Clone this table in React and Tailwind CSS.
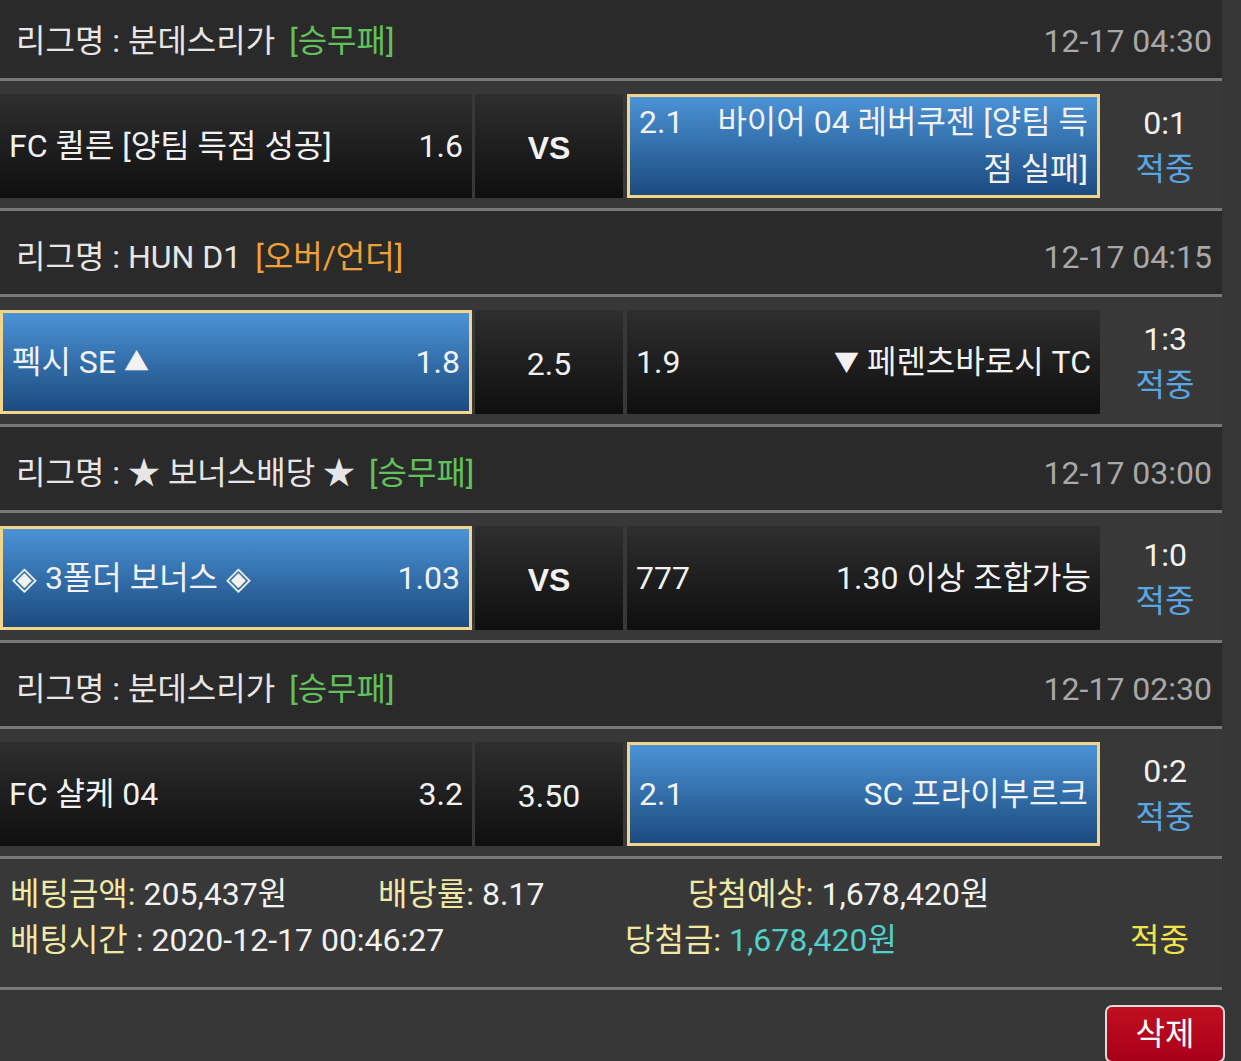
import React from 'react';

const FONT = { fontFamily: 'Roboto, "Noto Sans CJK KR", "Noto Sans", sans-serif' };

const Tri = ({ children }) => <span className="text-[25px] align-[2px]">{children}</span>;

const matches = [
  {
    league: '분데스리가',
    type: '[승무패]',
    typeColor: 'text-[#62c15a]',
    time: '12-17 04:30',
    home: { name: 'FC 퀼른 [양팀 득점 성공]', odds: '1.6', picked: false },
    draw: { text: 'VS', bold: true },
    away: { name: <>바이어 04 레버쿠젠 [양팀 득<br />점 실패]</>, odds: '2.1', picked: true },
    score: '0:1',
  },
  {
    league: 'HUN D1',
    type: '[오버/언더]',
    typeColor: 'text-[#f0a035]',
    time: '12-17 04:15',
    home: { name: <>펙시 SE <Tri>▲</Tri></>, odds: '1.8', picked: true },
    draw: { text: '2.5', bold: false },
    away: { name: <><Tri>▼</Tri> 페렌츠바로시 TC</>, odds: '1.9', picked: false },
    score: '1:3',
  },
  {
    league: '★ 보너스배당 ★',
    type: '[승무패]',
    typeColor: 'text-[#62c15a]',
    time: '12-17 03:00',
    home: { name: '◈ 3폴더 보너스 ◈', odds: '1.03', picked: true },
    draw: { text: 'VS', bold: true },
    away: { name: '1.30 이상 조합가능', odds: '777', picked: false },
    score: '1:0',
  },
  {
    league: '분데스리가',
    type: '[승무패]',
    typeColor: 'text-[#62c15a]',
    time: '12-17 02:30',
    home: { name: 'FC 샬케 04', odds: '3.2', picked: false },
    draw: { text: '3.50', bold: false },
    away: { name: 'SC 프라이부르크', odds: '2.1', picked: true },
    score: '0:2',
  },
];

const cellBase = 'h-[104px] flex items-center text-[32px] text-[#f2f2f2]';
const plain = 'bg-gradient-to-b from-[#2f2f2f] to-[#0f0f0f]';
const picked = 'bg-gradient-to-b from-[#4b93d6] to-[#1c4b80] border-[3px] border-[#f2d58a]';

const LeagueHeader = ({ m }) => (
  <div className="h-[86px] pt-[8px] flex items-center justify-between bg-[#2a2a2a] border-b-[3px] border-[#787878] pl-[16px] pr-[10px] text-[32px]">
    <div className="text-[#e6e6e6]">
      리그명 : {m.league}
      <span className={`ml-[14px] ${m.typeColor}`}>{m.type}</span>
    </div>
    <div className="text-[#a8a8a8]">{m.time}</div>
  </div>
);

const MatchRow = ({ m }) => (
  <div className="bg-[#383838] border-b-[3px] border-[#787878] pt-[13px] pb-[10px] flex">
    {/* Home */}
    <div className={`${cellBase} w-[472px] justify-between px-[9px] ${m.home.picked ? picked : plain}`}>
      <span>{m.home.name}</span>
      <span>{m.home.odds}</span>
    </div>
    {/* Draw */}
    <div className={`${cellBase} ml-[3px] w-[148px] justify-center pt-[4px] ${plain} ${m.draw.bold ? 'font-bold' : ''}`}>
      {m.draw.bold ? <span style={{ fontFamily: '"Liberation Sans", Arial, sans-serif' }}>{m.draw.text}</span> : m.draw.text}
    </div>
    {/* Away */}
    <div className={`${cellBase} ml-[4px] w-[473px] px-[9px] ${m.away.picked ? picked : plain}`}>
      <div className="w-full leading-[47px]">
        <span className="float-left">{m.away.odds}</span>
        <div className="text-right">{m.away.name}</div>
      </div>
    </div>
    {/* Result */}
    <div className="flex-1 flex flex-col items-center justify-center text-[32px] leading-[46px] pl-[8px]">
      <span className="text-[#f2f2f2]">{m.score}</span>
      <span className="text-[#5aa6e0]">적중</span>
    </div>
  </div>
);

export default function App() {
  return (
    <div className="min-h-[1061px] bg-[#363636] overflow-hidden" style={FONT}>
      <div className="-mt-[5px] w-[1222px]">
        {matches.map((m, i) => (
          <div key={i}>
            <LeagueHeader m={m} />
            <MatchRow m={m} />
          </div>
        ))}

        {/* Summary */}
        <div className="bg-[#383838] border-b-[3px] border-[#787878] pt-[12px] pb-[24px] text-[32px] leading-[46px]">
          <div className="flex">
            <div className="w-[378px] pl-[10px]">
              <span className="text-[#f1e8a6]">베팅금액:</span> <span className="text-[#f2f2f2]">205,437원</span>
            </div>
            <div className="w-[310px]">
              <span className="text-[#f1e8a6]">배당률:</span> <span className="text-[#f2f2f2]">8.17</span>
            </div>
            <div>
              <span className="text-[#f1e8a6]">당첨예상:</span> <span className="text-[#f2f2f2]">1,678,420원</span>
            </div>
          </div>
          <div className="flex">
            <div className="w-[625px] pl-[10px]">
              <span className="text-[#f1e8a6]">배팅시간</span> <span className="text-[#f2f2f2]">: 2020-12-17 00:46:27</span>
            </div>
            <div className="w-[505px]">
              <span className="text-[#f1e8a6]">당첨금:</span> <span className="text-[#4fd0c8]">1,678,420원</span>
            </div>
            <div className="text-[#f2e347]">적중</div>
          </div>
        </div>
      </div>

      {/* Actions */}
      <div className="flex justify-end pt-[15px] pr-[16px]">
        <button className="w-[120px] h-[58px] rounded-[7px] border-[2px] border-[#dcdcdc] bg-gradient-to-b from-[#c0101f] to-[#a8001a] text-white text-[32px] leading-none">
          삭제
        </button>
      </div>
    </div>
  );
}
